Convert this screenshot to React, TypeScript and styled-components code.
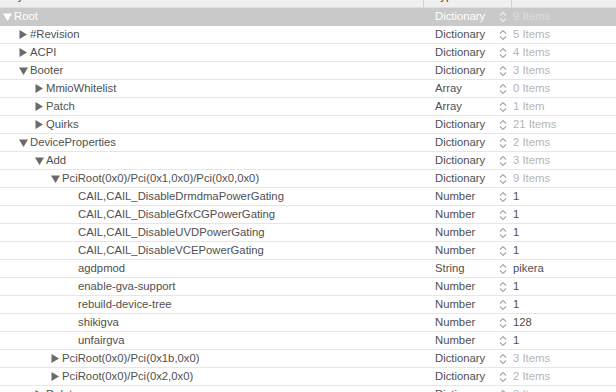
import React from 'react';
import styled, { createGlobalStyle } from 'styled-components';

type Node = {
  name: string;
  level: number;
  toggle?: 'open' | 'closed';
  type: string;
  value: string;
  selected?: boolean;
};

const rows: Node[] = [
  { name: 'Root', level: 0, toggle: 'open', type: 'Dictionary', value: '9 Items', selected: true },
  { name: '#Revision', level: 1, toggle: 'closed', type: 'Dictionary', value: '5 Items' },
  { name: 'ACPI', level: 1, toggle: 'closed', type: 'Dictionary', value: '4 Items' },
  { name: 'Booter', level: 1, toggle: 'open', type: 'Dictionary', value: '3 Items' },
  { name: 'MmioWhitelist', level: 2, toggle: 'closed', type: 'Array', value: '0 Items' },
  { name: 'Patch', level: 2, toggle: 'closed', type: 'Array', value: '1 Item' },
  { name: 'Quirks', level: 2, toggle: 'closed', type: 'Dictionary', value: '21 Items' },
  { name: 'DeviceProperties', level: 1, toggle: 'open', type: 'Dictionary', value: '2 Items' },
  { name: 'Add', level: 2, toggle: 'open', type: 'Dictionary', value: '3 Items' },
  { name: 'PciRoot(0x0)/Pci(0x1,0x0)/Pci(0x0,0x0)', level: 3, toggle: 'open', type: 'Dictionary', value: '9 Items' },
  { name: 'CAIL,CAIL_DisableDrmdmaPowerGating', level: 4, type: 'Number', value: '1' },
  { name: 'CAIL,CAIL_DisableGfxCGPowerGating', level: 4, type: 'Number', value: '1' },
  { name: 'CAIL,CAIL_DisableUVDPowerGating', level: 4, type: 'Number', value: '1' },
  { name: 'CAIL,CAIL_DisableVCEPowerGating', level: 4, type: 'Number', value: '1' },
  { name: 'agdpmod', level: 4, type: 'String', value: 'pikera' },
  { name: 'enable-gva-support', level: 4, type: 'Number', value: '1' },
  { name: 'rebuild-device-tree', level: 4, type: 'Number', value: '1' },
  { name: 'shikigva', level: 4, type: 'Number', value: '128' },
  { name: 'unfairgva', level: 4, type: 'Number', value: '1' },
  { name: 'PciRoot(0x0)/Pci(0x1b,0x0)', level: 3, toggle: 'closed', type: 'Dictionary', value: '3 Items' },
  { name: 'PciRoot(0x0)/Pci(0x2,0x0)', level: 3, toggle: 'closed', type: 'Dictionary', value: '2 Items' },
  { name: 'Delete', level: 2, toggle: 'closed', type: 'Dictionary', value: '3 Items' },
];

const GlobalStyle = createGlobalStyle`
  html, body {
    margin: 0;
    padding: 0;
    background: #ffffff;
  }
  body {
    font-family: "Liberation Sans", Arial, sans-serif;
    -webkit-font-smoothing: antialiased;
  }
`;

const Window = styled.div`
  width: 616px;
  height: 392px;
  overflow: hidden;
  background: #ffffff;
  font-size: 11.3px;
`;

const Grid = styled.div`
  display: grid;
  grid-template-columns: 424px 88px 1fr;
`;

const HeaderRow = styled(Grid)`
  height: 8px;
  overflow: hidden;
  background: #efefef;
  border-bottom: 1px solid #dedede;
  box-sizing: border-box;
`;

const HeaderCell = styled.div<{ $divider?: boolean; $pad: number }>`
  padding-left: ${p => p.$pad}px;
  border-right: ${p => (p.$divider ? '1px solid #d2d2d2' : 'none')};
  color: #3c3c3c;
  line-height: 14px;
`;

const HeaderLabel = styled.span`
  display: block;
  margin-top: -11px;
`;

const Row = styled(Grid)<{ $selected?: boolean }>`
  height: 18px;
  box-sizing: border-box;
  align-items: center;
  line-height: 17px;
  background: ${p => (p.$selected ? '#c9c9c9' : '#ffffff')};
  border-bottom: 1px solid ${p => (p.$selected ? '#c9c9c9' : '#e6e6e6')};
  color: ${p => (p.$selected ? '#ffffff' : '#505050')};
`;

const KeyCell = styled.div<{ $level: number }>`
  display: flex;
  align-items: center;
  padding-left: ${p => 3 + p.$level * 16}px;
  white-space: nowrap;
  overflow: hidden;
`;

const Toggle = styled.span`
  display: inline-flex;
  align-items: center;
  justify-content: flex-start;
  width: 11px;
  flex: none;
`;

const TypeCell = styled.div`
  display: flex;
  align-items: center;
  justify-content: space-between;
  padding-left: 11px;
  padding-right: 5px;
`;

const ValueCell = styled.div<{ $muted: boolean; $selected?: boolean }>`
  padding-left: 1px;
  white-space: nowrap;
  color: ${p =>
    p.$selected ? '#dddddd' : p.$muted ? '#b5b5b5' : '#505050'};
`;

const Triangle = ({ open, color }: { open: boolean; color: string }) =>
  open ? (
    <svg width="9" height="8" viewBox="0 0 9 8">
      <polygon points="0,0.5 9,0.5 4.5,8" fill={color} />
    </svg>
  ) : (
    <svg width="8" height="9" viewBox="0 0 8 9">
      <polygon points="0.5,0 8,4.5 0.5,9" fill={color} />
    </svg>
  );

const Stepper = ({ color }: { color: string }) => (
  <svg width="8" height="12" viewBox="0 0 8 12">
    <polyline points="1,4.5 4,1.5 7,4.5" fill="none" stroke={color} strokeWidth="1.1" />
    <polyline points="1,7.5 4,10.5 7,7.5" fill="none" stroke={color} strokeWidth="1.1" />
  </svg>
);

export default function App() {
  return (
    <>
      <GlobalStyle />
      <Window>
        <HeaderRow>
          <HeaderCell $divider $pad={4}>
            <HeaderLabel>Key</HeaderLabel>
          </HeaderCell>
          <HeaderCell $divider $pad={10}>
            <HeaderLabel>Type</HeaderLabel>
          </HeaderCell>
          <HeaderCell $pad={8}>
            <HeaderLabel>Value</HeaderLabel>
          </HeaderCell>
        </HeaderRow>
        {rows.map((r, i) => {
          const muted = /Item/.test(r.value);
          return (
            <Row key={i} $selected={r.selected}>
              <KeyCell $level={r.level}>
                <Toggle>
                  {r.toggle && (
                    <Triangle
                      open={r.toggle === 'open'}
                      color={r.selected ? '#ffffff' : '#6a6a6a'}
                    />
                  )}
                </Toggle>
                {r.name}
              </KeyCell>
              <TypeCell>
                <span>{r.type}</span>
                <Stepper color={r.selected ? '#eeeeee' : '#a8a8a8'} />
              </TypeCell>
              <ValueCell $muted={muted} $selected={r.selected}>
                {r.value}
              </ValueCell>
            </Row>
          );
        })}
      </Window>
    </>
  );
}
